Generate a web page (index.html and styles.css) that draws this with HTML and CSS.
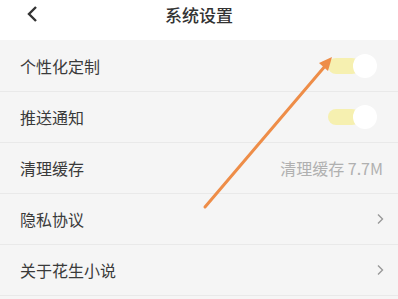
FILE: index.html
```html
<!DOCTYPE html>
<html lang="zh-CN">
<head>
    <meta charset="UTF-8">
    <meta name="viewport" content="width=device-width, initial-scale=1.0">
    <title>系统设置</title>
    <link rel="stylesheet" href="styles.css">
</head>
<body>
    <div class="header">
        <span class="back">
            <svg width="12" height="18" viewBox="0 0 12 18"><path d="M10 2 L3 9 L10 16" fill="none" stroke="#333" stroke-width="2.4"/></svg>
        </span>
        <h1>系统设置</h1>
    </div>

    <ul class="settings">
        <li class="row">
            <span class="label">个性化定制</span>
            <span class="switch"><span class="knob"></span></span>
        </li>
        <li class="row">
            <span class="label">推送通知</span>
            <span class="switch"><span class="knob"></span></span>
        </li>
        <li class="row">
            <span class="label">清理缓存</span>
            <span class="value">清理缓存 7.7M</span>
        </li>
        <li class="row">
            <span class="label">隐私协议</span>
            <svg class="chevron" width="8" height="12" viewBox="0 0 8 12"><path d="M2 1.5 L6.5 6 L2 10.5" fill="none" stroke="#999" stroke-width="1.4"/></svg>
        </li>
        <li class="row">
            <span class="label">关于花生小说</span>
            <svg class="chevron" width="8" height="12" viewBox="0 0 8 12"><path d="M2 1.5 L6.5 6 L2 10.5" fill="none" stroke="#999" stroke-width="1.4"/></svg>
        </li>
    </ul>

    <!-- annotation arrow drawn over the page -->
    <svg class="pointer" width="398" height="299" viewBox="0 0 398 299">
        <line x1="205" y1="207" x2="326" y2="65" stroke="#ee8d48" stroke-width="3" stroke-linecap="round"/>
        <polygon points="332,57 319,63 328,71" fill="#ee8d48"/>
    </svg>
</body>
</html>
```

FILE: styles.css
```css
body {
    margin: 0;
    width: 398px;
    height: 299px;
    overflow: hidden;
    background-color: #f5f5f5;
    font-family: "Noto Sans CJK SC", "Noto Sans", sans-serif;
    position: relative;
}

.header {
    height: 40px;
    background-color: #fff;
    display: flex;
    align-items: center;
    justify-content: center;
    position: relative;
}

.header h1 {
    margin: 0;
    font-size: 17px;
    font-weight: 500;
    color: #333;
    margin-top: -12px;
}

.back {
    position: absolute;
    left: 26px;
    top: 4px;
}

.settings {
    list-style: none;
    margin: 0;
    padding: 0;
}

.row {
    height: 50px;
    border-bottom: 1px solid #e9e9e9;
    display: flex;
    align-items: center;
    justify-content: space-between;
    padding: 0 14px 0 20px;
}

.row:first-child {
    height: 51px;
}

.label {
    font-size: 16px;
    color: #3a3a3a;
}

.value {
    font-size: 16px;
    color: #b0b0b0;
    margin-right: 1px;
}

.switch {
    width: 32px;
    height: 16px;
    border-radius: 8px;
    background-color: #f6f0b0;
    position: relative;
    margin-right: 24px;
}

.knob {
    position: absolute;
    right: -17px;
    top: -4px;
    width: 24px;
    height: 24px;
    border-radius: 50%;
    background-color: #fff;
}

.pointer {
    position: absolute;
    left: 0;
    top: 0;
}
```
